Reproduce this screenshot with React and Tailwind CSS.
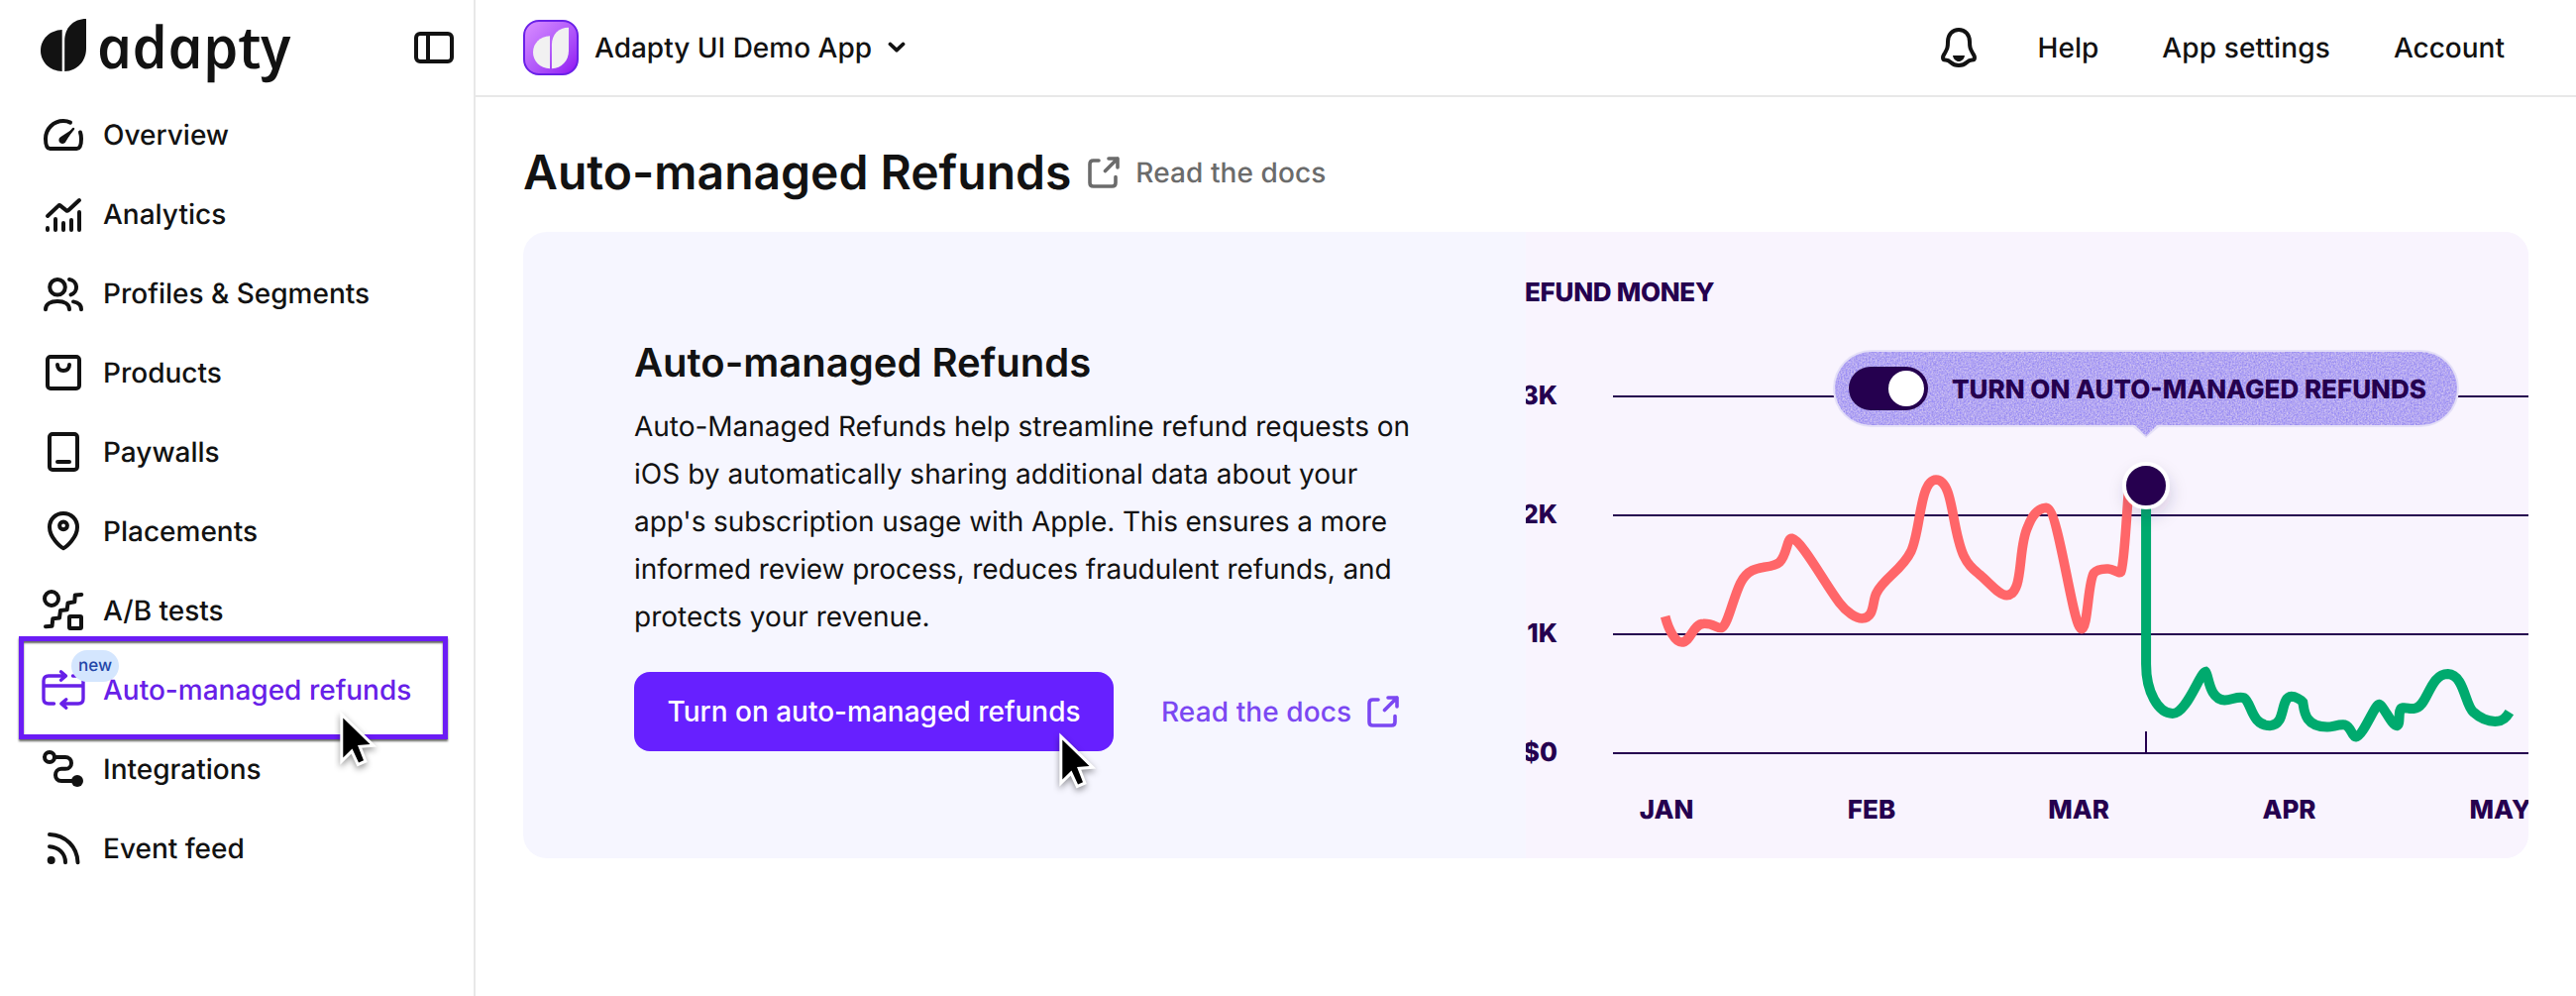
import React from "react";

const Stroke = ({ children }) => (
  <svg
    viewBox="0 0 48 48"
    className="h-12 w-12 shrink-0"
    fill="none"
    stroke="currentColor"
    strokeWidth="4"
    strokeLinecap="round"
    strokeLinejoin="round"
  >
    {children}
  </svg>
);

const icons = {
  overview: (
    <Stroke>
      <path d="M31 11.6C29 10.6 26.500 10 24 10C14 10 6 18 6 28C6 32 7 38 10.500 38H37.500C41 38 42 32 42 28C42 25.500 41.700 23.500 41 21.500" />
      <path d="M34.800 17.200L21 26.200A3.700 3.700 0 1 0 26.600 30.400Z" fill="currentColor" stroke="none" />
      <path d="M34 18L25 29" strokeWidth="2.500" />
    </Stroke>
  ),
  analytics: (
    <Stroke>
      <path d="M8 26L19 15.600Q20 14.600 21 15.600L27 20.400Q28 21.200 29 20.200L40 10" />
      <path d="M8 38V40M16 29V40M24 33V40M32 30V40M40 22V40" />
    </Stroke>
  ),
  profiles: (
    <Stroke>
      <circle cx="18" cy="17.800" r="7.800" />
      <path d="M30 10A7.900 7.900 0 0 1 31.500 25.400M6 40.300C6 35 11 32 18 32C25 32 30 35 30 40.300M34 32.400C39 33.200 42 36 42 40.300" />
    </Stroke>
  ),
  products: (
    <Stroke>
      <rect x="8" y="8" width="32" height="32" rx="3" />
      <path d="M18 16C18 20 20.500 22 24 22C27.500 22 30 20 30 16" />
    </Stroke>
  ),
  paywalls: (
    <Stroke>
      <rect x="10" y="6" width="28" height="36" rx="3" />
      <path d="M18 34H30" />
    </Stroke>
  ),
  placements: (
    <Stroke>
      <path d="M24 41.200C21 39.800 10 30.500 10 20C10 12 16 6 24 6C32 6 38 12 38 20C38 30.500 27 39.800 24 41.200Z" />
      <circle cx="24" cy="18.300" r="3.900" />
    </Stroke>
  ),
  ab: (
    <Stroke>
      <circle cx="12" cy="12" r="7" />
      <rect x="30" y="30" width="12" height="12" rx="1" />
      <path d="M6 40.200L12.500 39.800L13.300 32.200L20 31.500L21 24L27.700 23.300L28.500 16.500L35.300 15.300L35.800 8.500L42.300 8" />
    </Stroke>
  ),
  refunds: (
    <Stroke>
      <path d="M26 10H9Q4 10 4 15V33Q4 38 9 38H14.500M21.500 5.800L26.500 10L21.500 14.200M4 20H44M33.500 10H39Q44 10 44 15V33Q44 38 39 38H22M26.800 33.800L21.800 38L26.800 42.200" strokeWidth="3.400" />
    </Stroke>
  ),
  integrations: (
    <Stroke>
      <circle cx="10" cy="12" r="5" />
      <path d="M16 12H26C34 12 34 23.800 26 23.800H22C14 23.800 14 36 22 36H38" />
      <circle cx="38" cy="36" r="6" fill="currentColor" stroke="none" />
    </Stroke>
  ),
  feed: (
    <Stroke>
      <circle cx="11.700" cy="36" r="4" fill="currentColor" stroke="none" />
      <path d="M10 22.200C19.500 22.800 26 29.500 26 38.200M10 10C26.500 10.800 38 22.500 38.500 38.200" />
    </Stroke>
  ),
};

const nav = [
  ["Overview", "overview"],
  ["Analytics", "analytics"],
  ["Profiles & Segments", "profiles"],
  ["Products", "products"],
  ["Paywalls", "paywalls"],
  ["Placements", "placements"],
  ["A/B tests", "ab"],
  ["Auto-managed refunds", "refunds"],
  ["Integrations", "integrations"],
  ["Event feed", "feed"],
];

const Leaves = ({ className }) => (
  <svg viewBox="41 19 46 53" className={className} fill="currentColor">
    <path d="M62.700 30V72C50 71.500 41 62.500 41 51C41 39.500 50 30.500 62.700 30Z" />
    <path d="M87 19V49C87 61.500 78 71.500 65.200 72V41C65.200 28 74 19 87 19Z" />
  </svg>
);

const ExternalIcon = ({ className }) => (
  <svg viewBox="0 0 32 32" className={className} fill="none" stroke="currentColor" strokeWidth="3.600" strokeLinecap="round" strokeLinejoin="round">
    <path d="M11 4H5.500Q2 4 2 7.500V26.500Q2 30 5.500 30H24.500Q28 30 28 26.500V20.500" />
    <path d="M17.500 14.500L30 2M21 2H30V11" />
  </svg>
);

const Cursor = ({ className }) => (
  <svg viewBox="-6 -6 56 72" className={className}>
    <path
      d="M3.300 7.500V47.500L12.500 38.500L19 52.500L24 50.300L18 35L30.500 34Z"
      stroke="#fff"
      strokeWidth="6"
      paintOrder="stroke"
      className="drop-shadow-[0_3px_3px_rgba(0,0,0,0.4)]"
    />
  </svg>
);

function Sidebar() {
  return (
    <aside className="flex w-[480px] shrink-0 flex-col border-r-2 border-[#e8e8e8]">
      <div className="flex h-24 items-start justify-between pl-[41px] pr-5">
        <div className="flex gap-[7px]">
          <Leaves className="mt-[19px] h-[53px] w-[46px]" />
          <svg viewBox="-8 0 220 96" className="h-24 w-[220px]" fill="currentColor">
            <text
              x="-1"
              y="0"
              transform="translate(0 69) skewX(12)"
              className="font-['Open_Sans'] text-[59px] font-semibold italic"
              textLength="196"
              lengthAdjust="spacingAndGlyphs"
            >
              adapty
            </text>
          </svg>
        </div>
        <svg viewBox="0 0 40 32" className="mt-8 h-8 w-10" fill="none" stroke="currentColor" strokeWidth="4">
          <rect x="2" y="2" width="36" height="28" rx="4" />
          <path d="M14 2V30" />
        </svg>
      </div>
      <nav className="flex flex-col">
        {nav.map(([label, key]) =>
          key === "refunds" ? (
            <a key={key} className="relative flex h-20 items-center gap-4 pl-10 text-[#6720e8]">
              {icons[key]}
              <span className="absolute top-0 left-[72px] flex h-8 w-12 items-center justify-center rounded-full bg-[#d4e6fe] text-[17px] leading-5 font-medium text-[#2347a8]">
                new
              </span>
              <span className="relative">{label}</span>
              <span className="absolute -top-3.5 left-[19px] h-[104px] w-[433px] border-5 border-[#6b1cf5] shadow-[0_2px_2px_rgba(0,0,0,0.6),inset_0_2px_2px_rgba(0,0,0,0.6)]" />
              <Cursor className="absolute top-[55px] left-[337px] z-10 h-[72px] w-14" />
            </a>
          ) : (
            <a key={key} className="flex h-20 items-center gap-4 pl-10">
              {icons[key]}
              <span>{label}</span>
            </a>
          )
        )}
      </nav>
    </aside>
  );
}

function Header() {
  return (
    <header className="flex h-[98px] items-center justify-between border-b-2 border-[#e8e8e8] pr-[72px] pl-12">
      <div className="flex items-center">
        <span className="flex h-14 w-14 items-center justify-center rounded-2xl border-2 border-[#6a20e8] bg-linear-to-br from-[#d98cff] to-[#9200f2] text-[#f1f1f1]">
          <Leaves className="h-[43px] w-9" />
        </span>
        <span className="ml-4">Adapty UI Demo App</span>
        <svg viewBox="0 0 18 12" className="ml-4 h-3 w-[18px]" fill="none" stroke="currentColor" strokeWidth="3.800" strokeLinecap="round" strokeLinejoin="round">
          <path d="M2.500 2.500L9 8.700L15.500 2.500" />
        </svg>
      </div>
      <div className="flex items-center">
        <svg viewBox="0 0 36 40" className="mr-[62px] h-10 w-9" fill="none" stroke="currentColor" strokeWidth="4" strokeLinejoin="round">
          <path d="M18 2C11.500 2 7 7 7 14C7 20 6.500 21 4 25.500C2.500 28 2 28.500 2 30C2 31.800 3 32.500 4.500 32.500C7.500 32.500 8 33 10 35C12.500 37.500 14.500 38 18 38C21.500 38 23.500 37.500 26 35C28 33 28.500 32.500 31.500 32.500C33 32.500 34 31.800 34 30C34 28.500 33.500 28 32 25.500C29.500 21 29 20 29 14C29 7 24.500 2 18 2Z" />
          <path d="M12 28H24C23.500 31.500 21 34 18 34C15 34 12.500 31.500 12 28Z" fill="currentColor" stroke="none" />
        </svg>
        <nav className="flex gap-16">
          <a>Help</a>
          <a className="tracking-[0.13px]">App settings</a>
          <a>Account</a>
        </nav>
      </div>
    </header>
  );
}

const rowLabels = [
  ["3K", 400],
  ["2K", 520],
  ["1K", 640],
  ["$0", 760],
];
const months = [
  ["JAN", 1682],
  ["FEB", 1889],
  ["MAR", 2098],
  ["APR", 2310.5],
  ["MAY", 2523.5],
];

function RefundChart() {
  return (
    <svg viewBox="1540 234 1012 632" className="h-[632px] w-[1012px] shrink-0 bg-[#f9f4fe]" fill="#25004f" fontSize="26" fontWeight="800">
      <defs>
        <filter id="grain" x="0" y="0" width="1" height="1" colorInterpolationFilters="sRGB">
          <feTurbulence type="fractalNoise" baseFrequency="0.6" numOctaves="2" seed="4" />
          <feColorMatrix values="0.4 0 0 0 0.500  0.4 0 0 0 0.450  0 0 0.1 0 0.900  0 0 0 0 1" />
          <feComposite in2="SourceGraphic" operator="in" />
        </filter>
        <filter id="dotShadow" x="-1" y="-1" width="3" height="3">
          <feDropShadow dx="2" dy="8" stdDeviation="8" floodColor="#25004f" floodOpacity="0.15" />
        </filter>
      </defs>
      <text x="1539" y="304" textLength="191.500" lengthAdjust="spacing">EFUND MONEY</text>
      {rowLabels.map(([label, y]) => (
        <g key={label}>
          <text x="1572" y={y + 8} textAnchor="end">{label}</text>
          <rect x="1628" y={y - 1} width="924" height="2" />
        </g>
      ))}
      {months.map(([label, x]) => (
        <text key={label} x={x} y="826" textAnchor="middle">{label}</text>
      ))}
      <rect x="2165" y="738" width="2" height="22" />
      <g fill="none">
        <path
          transform="translate(1660 340) scale(0.33333)"
          stroke="#ff6669"
          strokeWidth="29"
          d="M62 846C72 885 92 924 112 924C140 924 146 868 178 868C208 866 222 885 234 880C252 870 268 790 290 745C322 680 378 708 408 682C432 660 430 608 446 610C476 616 546 748 590 805C612 834 640 852 658 852C698 850 688 800 702 775C724 730 780 705 806 650C836 590 832 434 882 432C936 434 928 580 966 662C980 692 994 702 1015 720C1050 750 1074 782 1096 782C1150 780 1128 640 1160 575C1176 532 1196 518 1216 517C1254 518 1296 884 1323 884C1342 884 1342 740 1360 715C1372 700 1392 702 1404 702C1420 702 1436 718 1442 711C1452 690 1456 580 1466 460"
        />
        <path
          transform="translate(2040 320) scale(0.35714)"
          stroke="#00aa6e"
          strokeWidth="28"
          d="M353 500V980C353 1060 388 1120 428 1120C468 1120 504 1006 521 1002C530 1010 530 1080 575 1082C595 1082 612 1070 630 1076C652 1090 650 1154 703 1154C750 1154 730 1074 764 1072C774 1072 790 1080 796 1088C800 1110 800 1158 865 1158C880 1158 896 1150 915 1152C934 1158 934 1186 946 1186C966 1184 1000 1094 1011 1094C1024 1096 1046 1154 1062 1154C1074 1150 1062 1106 1078 1104C1090 1102 1096 1108 1110 1106C1150 1104 1152 1008 1206 1008C1252 1010 1254 1096 1278 1116C1300 1136 1324 1143 1344 1142C1362 1140 1370 1132 1380 1116"
        />
      </g>
      <circle cx="2166" cy="490" r="22" stroke="#fff" strokeWidth="4" filter="url(#dotShadow)" />
      <path d="M1889 353H2443A39 39 0 0 1 2443 431H2179L2166 442L2153 431H1889A39 39 0 0 1 1889 353Z" fill="#e5e0f7" />
      <path d="M1889 355H2443A37 37 0 0 1 2443 429H2177L2166 440L2155 429H1889A37 37 0 0 1 1889 355Z" filter="url(#grain)" />
      <rect x="1866" y="370" width="80" height="44" rx="22" />
      <circle cx="1924" cy="392" r="18" fill="#fff" />
      <text x="1970" y="402" textLength="479" lengthAdjust="spacing">TURN ON AUTO-MANAGED REFUNDS</text>
    </svg>
  );
}

export default function App() {
  return (
    <div className="flex h-[1005px] w-[2600px] overflow-hidden bg-white font-['Inter',sans-serif] text-[28px] leading-12 font-medium text-[#121212] [text-rendering:geometricPrecision]">
      <Sidebar />
      <div className="flex flex-1 flex-col">
        <Header />
        <main className="px-12 pt-[52px]">
          <div className="flex h-12 items-center">
            <h1 className="text-5xl font-semibold">Auto-managed Refunds</h1>
            <a className="ml-[17px] flex items-center gap-4 tracking-[0.08px] text-[#6b6b6b]">
              <ExternalIcon className="h-8 w-8" />
              Read the docs
            </a>
          </div>
          <section className="mt-9 flex h-[632px] w-[2024px] overflow-hidden rounded-3xl bg-[#f6f6ff]">
            <div className="flex flex-1 flex-col items-start pt-[108px] pl-28">
              <h2 className="text-[40px] font-semibold">Auto-managed Refunds</h2>
              <p className="mt-4 w-[800px] font-normal">
                <span className="tracking-[-0.02px]">Auto-Managed Refunds help streamline refund requests on</span>
                <br />
                <span className="tracking-[0.03px]">iOS by automatically sharing additional data about your</span>
                <br />
                <span className="tracking-[-0.09px]">app's subscription usage with Apple. This ensures a more</span>
                <br />
                <span className="tracking-[-0.08px]">informed review process, reduces fraudulent refunds, and</span>
                <br />
                protects your revenue.
              </p>
              <div className="mt-8 flex items-center gap-12">
                <button className="relative flex h-20 w-[484px] items-center justify-center rounded-2xl bg-[#6720ff] text-white">
                  Turn on auto-managed refunds
                  <Cursor className="absolute top-[55px] left-[423px] h-[72px] w-14" />
                </button>
                <a className="flex items-center gap-4 tracking-[0.1px] text-[#7b48f2]">
                  Read the docs
                  <ExternalIcon className="h-8 w-8" />
                </a>
              </div>
            </div>
            <RefundChart />
          </section>
        </main>
      </div>
    </div>
  );
}
